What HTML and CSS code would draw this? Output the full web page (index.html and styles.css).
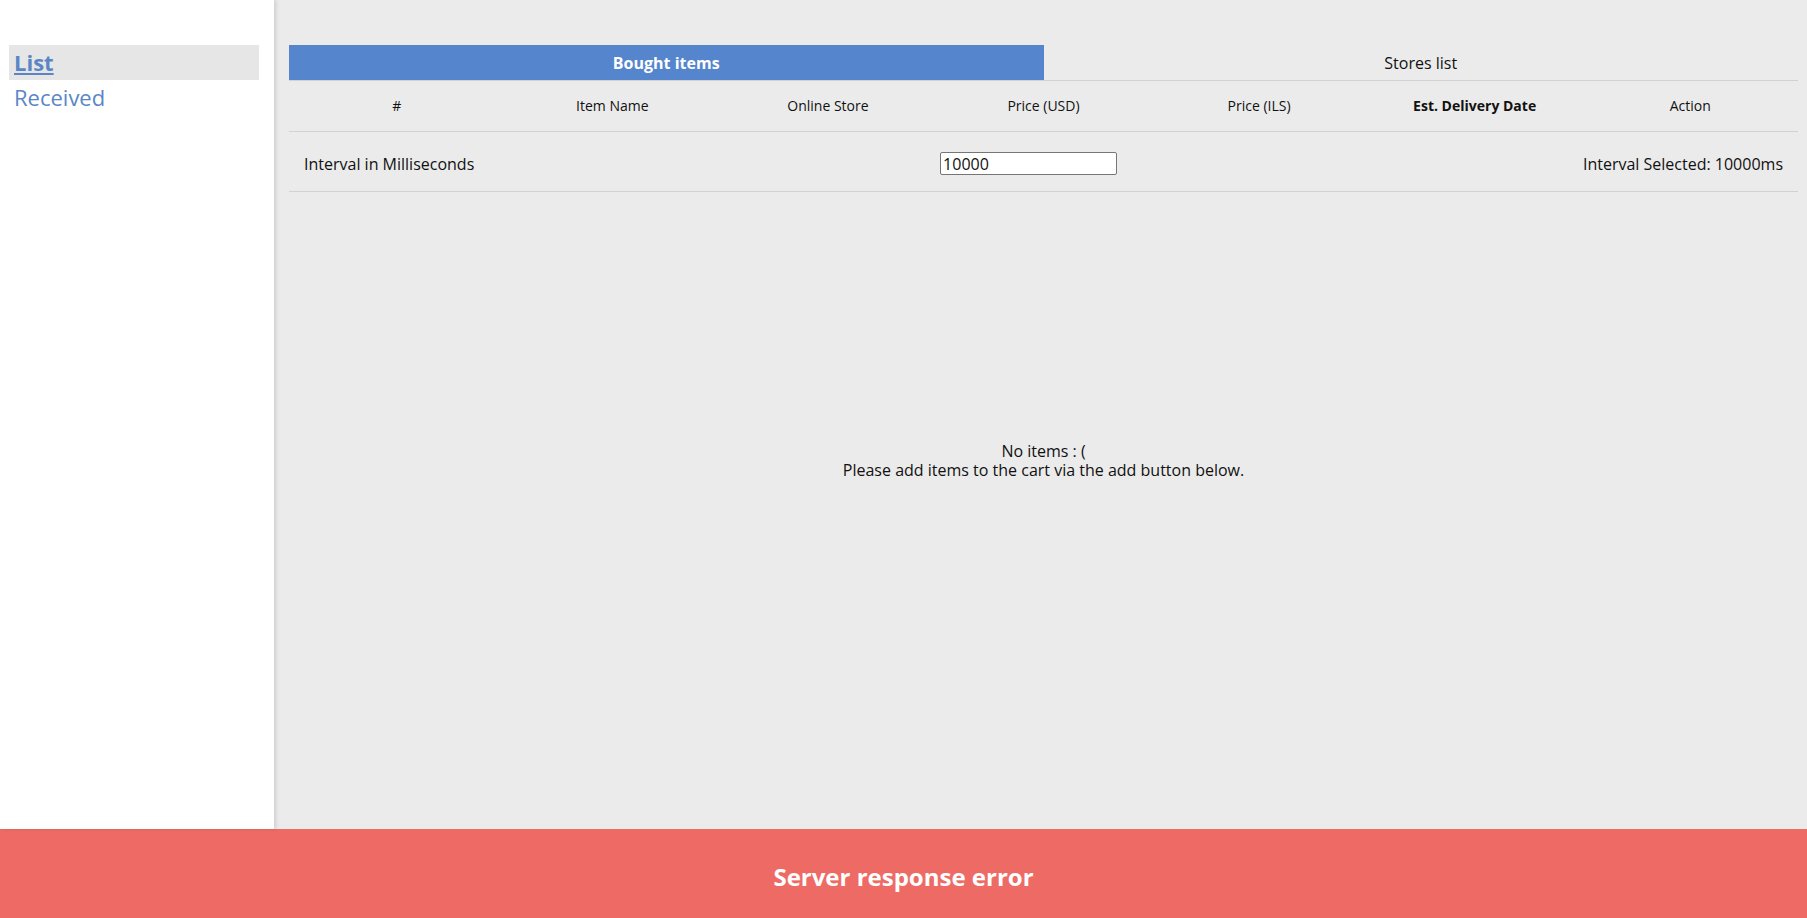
FILE: index.html
```html
<!DOCTYPE html>
<html>
<head>
<meta charset="utf-8">
<link rel="stylesheet" href="styles.css">
</head>
<body>
<div class="app">
  <div class="top">
    <aside class="sidebar">
      <a class="nav-item active" href="#">List</a>
      <a class="nav-item" href="#">Received</a>
    </aside>
    <main class="main">
      <div class="tabs">
        <div class="tab selected">Bought items</div>
        <div class="tab">Stores list</div>
      </div>
      <div class="head-row">
        <div class="cell">#</div>
        <div class="cell">Item Name</div>
        <div class="cell">Online Store</div>
        <div class="cell">Price (USD)</div>
        <div class="cell">Price (ILS)</div>
        <div class="cell strong">Est. Delivery Date</div>
        <div class="cell">Action</div>
      </div>
      <div class="interval-row">
        <span class="interval-label">Interval in Milliseconds</span>
        <input class="interval-input" type="text" value="10000">
        <span class="interval-value">Interval Selected: 10000ms</span>
      </div>
      <div class="empty">
        <div>No items : (</div>
        <div>Please add items to the cart via the add button below.</div>
      </div>
    </main>
  </div>
  <footer class="error-bar">Server response error</footer>
</div>
</body>
</html>
```

FILE: styles.css
```css
* { box-sizing: border-box; }
html, body { margin: 0; padding: 0; }
body {
  font-family: "Open Sans", "Noto Sans", sans-serif;
  color: #111;
  background: #ebebeb;
}
.app {
  display: flex;
  flex-direction: column;
  height: 918px;
}
.top {
  display: flex;
  height: 829px;
}
.sidebar {
  width: 274px;
  flex: none;
  background: #fff;
  padding: 45px 15px 0 9px;
  display: flex;
  flex-direction: column;
  box-shadow: 2px 0 4px rgba(0,0,0,0.12);
  position: relative;
  z-index: 1;
}
.nav-item {
  display: block;
  height: 35px;
  line-height: 34px;
  padding-left: 5px;
  font-size: 22px;
  color: #5b86c6;
  text-decoration: none;
}
.nav-item.active {
  background: #e6e6e6;
  font-weight: 700;
  text-decoration: underline;
}
.main {
  flex: 1;
  padding: 45px 9px 0 15px;
  display: flex;
  flex-direction: column;
}
.tabs {
  display: flex;
  height: 36px;
  border-bottom: 1px solid #d2d2d2;
}
.tab {
  flex: 1;
  display: flex;
  align-items: center;
  justify-content: center;
  font-size: 16px;
  color: #111;
}
.tab.selected {
  background: #5585cd;
  color: #fff;
  font-weight: 700;
}
.head-row {
  display: grid;
  grid-template-columns: repeat(7, 1fr);
  height: 51px;
  padding-bottom: 2px;
  align-items: center;
  border-bottom: 1px solid #d2d2d2;
  font-size: 14px;
}
.cell { text-align: center; }
.cell.strong { font-weight: 700; }
.interval-row {
  display: flex;
  justify-content: space-between;
  align-items: center;
  height: 60px;
  padding: 4px 15px 0 15px;
  border-bottom: 1px solid #d2d2d2;
  font-size: 16px;
}
.interval-input {
  width: 177px;
  height: 23px;
  border: 1px solid #767676;
  border-radius: 2px;
  padding: 0 2px;
  font-family: "Open Sans", "Noto Sans", sans-serif;
  font-size: 16px;
  color: #111;
  background: #fff;
}
.empty {
  text-align: center;
  font-size: 16px;
  line-height: 19px;
  padding-top: 250px;
}
.error-bar {
  height: 89px;
  padding-top: 6px;
  background: #ee6b65;
  color: #fff;
  font-weight: 700;
  font-size: 24px;
  display: flex;
  align-items: center;
  justify-content: center;
}
```
